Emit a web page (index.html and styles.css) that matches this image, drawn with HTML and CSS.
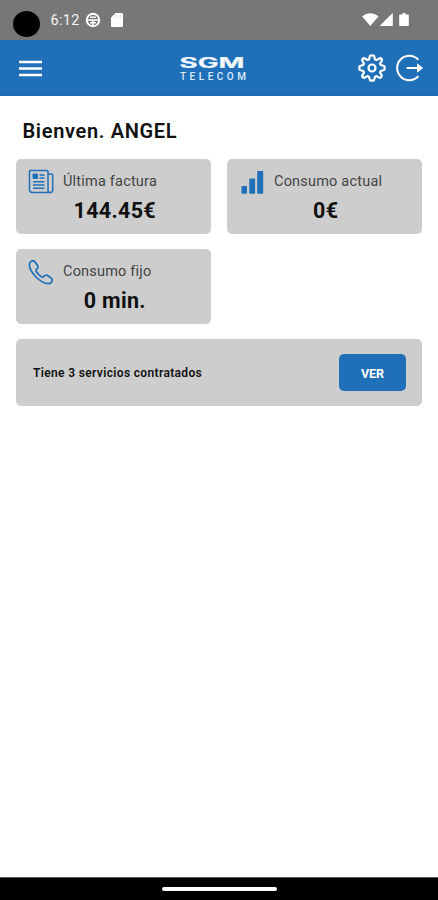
FILE: index.html
```html
<!DOCTYPE html>
<html lang="es">
<head>
<meta charset="utf-8">
<meta name="viewport" content="width=device-width, initial-scale=1">
<title>SGM Telecom</title>
<link rel="stylesheet" href="styles.css">
</head>
<body>
<div class="screen">
  <div class="status">
    <span class="camera"></span>
    <span class="clock">6:12</span>
    <svg class="status-app" width="16" height="16" viewBox="0 0 16 16"><circle cx="8" cy="8" r="6.200" fill="none" stroke="#fff" stroke-width="2"/><path d="M1 8h14M8 8v6M5 5.200h6M5 10.700h6" fill="none" stroke="#fff" stroke-width="1.600"/></svg>
    <svg class="status-sd" width="12" height="14" viewBox="0 0 12 14"><path d="M4.500 0H11a1 1 0 0 1 1 1v12a1 1 0 0 1-1 1H1a1 1 0 0 1-1-1V4.500z" fill="#fff"/><path d="M4.700 2v2.300M7 2v2.300M9.300 2v2.300" stroke="#ccc" stroke-width=".8"/></svg>
    <svg class="status-signals" width="50" height="16" viewBox="0 0 50 16"><path d="M0 4.300Q8.300-1.800 16.600 4.300L8.300 14z M30.800.8V14H17.600z M38 2.500h2.500V1h3v1.500H46q.8 0 .8.800v10q0 .8-.8.800h-8q-.8 0-.8-.8v-10q0-.8.800-.8z" fill="#fff"/></svg>
  </div>
  <header class="bar">
    <svg class="menu" width="23" height="17" viewBox="0 0 23 17"><path d="M0 2h23M0 8.500h23M0 15h23" stroke="#fff" stroke-width="2.300"/></svg>
    <svg class="logo" width="70" height="26" viewBox="0 0 70 26">
      <text class="logo-main" x="1.500" y="13" textLength="65" lengthAdjust="spacingAndGlyphs">SGM</text>
      <text class="logo-sub" x="2" y="25" textLength="66" lengthAdjust="spacing">TELECOM</text>
    </svg>
    <svg class="gear" width="28" height="28" viewBox="0 0 28 28" fill="none" stroke="#fff" stroke-width="2.200" stroke-linejoin="round"><path d="M12 1.800Q14 .8 16 1.800L17 5.400L18.600 6L21.900 4.200Q24 4.500 24 6.400L22.100 9.500L22.700 11L26.200 12Q27.200 14 26.200 16L22.700 17L22.100 18.600L23.900 21.700Q23.600 23.700 21.700 23.900L18.600 22.100L17 22.700L16 26.200Q14 27.200 12 26.200L11 22.700L9.400 22.100L6.300 23.900Q4.300 23.700 4.100 21.700L5.900 18.600L5.300 17L1.800 16Q.8 14 1.800 12L5.300 11L5.900 9.500L4.100 6.300Q4.300 4.300 6.300 4.100L9.400 6L11 5.400z"/><circle cx="14" cy="14" r="3.500"/></svg>
    <svg class="logout" width="28" height="28" viewBox="0 0 28 28" fill="none" stroke="#fff" stroke-width="2"><path d="M22.300 5.700A12.200 12.200 0 1 0 22.300 22.300M10.500 14h14"/><path d="M21.500 10l5 4-5 4z" fill="#fff" stroke-width="1"/></svg>
  </header>
  <main>
    <h1>Bienven. ANGEL</h1>
    <div class="grid">
      <section class="card">
        <div class="head">
          <svg width="26" height="26" viewBox="0 0 26 26" fill="none" stroke="#1f70b9" stroke-width="1.500" stroke-linejoin="round"><path d="M20 22V2.500Q20 1.500 19 1.500H2.500Q1.500 1.500 1.500 2.500v18q0 3 3 3h18q2.200 0 2.200-2.200V6Q24.700 5 23.700 5H20v16.500q0 2 2 2"/><path d="M11.500 6h5M11.500 9h5M5 12.700h11.500M5 16h11.500M5 19.300h11.500"/><rect x="5" y="5" width="4.500" height="4.500" fill="#1f70b9" stroke-width="1"/></svg>
          <span>Última factura</span>
        </div>
        <strong>144.45€</strong>
      </section>
      <section class="card">
        <div class="head">
          <svg width="26" height="26" viewBox="0 0 26 26" fill="#1f70b9"><rect x="2.500" y="17" width="5.500" height="7.800" rx=".8"/><rect x="10.300" y="9.500" width="5.800" height="15.300" rx=".8"/><rect x="18.200" y="2" width="6" height="22.800" rx=".8"/></svg>
          <span>Consumo actual</span>
        </div>
        <strong>0€</strong>
      </section>
      <section class="card">
        <div class="head">
          <svg width="26" height="26" viewBox="0 0 26 26" fill="none" stroke="#1f70b9" stroke-width="1.700" stroke-linejoin="round"><path d="M1.300 5.500Q1.300 3.500 3 2.400Q5.500.8 7.300 3.200L9.500 6.500Q10.700 8.500 8.800 10Q7.400 11 8.400 12.700Q10.200 15.700 13.300 17.600Q15 18.600 16 17.200Q17.500 15.300 19.500 16.500L22.800 18.700Q25.200 20.500 23.600 23Q22.500 24.700 20.500 24.700Q14.500 24.500 8 18Q1.500 11.500 1.300 5.500z"/></svg>
          <span>Consumo fijo</span>
        </div>
        <strong>0 min.</strong>
      </section>
    </div>
    <section class="services">
      <span class="services-text">Tiene 3 servicios contratados</span>
      <button>VER</button>
    </section>
  </main>
  <footer class="nav"><span class="handle"></span></footer>
</div>
</body>
</html>
```
FILE: styles.css
```css
* { box-sizing: border-box; }
body { margin: 0; background: #fff; font-family: Roboto, sans-serif; color: #111; }
.screen { width: 438px; height: 900px; display: flex; flex-direction: column; }
svg { display: block; flex: none; }
.status { height: 40px; background: #777; display: flex; align-items: center; padding-left: 12.500px; }
.camera { width: 27px; height: 26px; border-radius: 50%; background: #000; margin-top: 8px; }
.clock { width: 34px; margin-left: 11px; color: #f4f4f4; font-size: 14.500px; letter-spacing: .3px; line-height: 20px; margin-top: 1px; }
.status-sd { margin-left: 10px; }
.status-signals { margin-left: auto; margin-right: 26px; }
.bar { height: 56px; background: #1f70b9; display: flex; align-items: center; padding: 1px 14.500px 0 18.500px; border-bottom: 1px solid #1b69b1; }
.logo { margin-left: 136.500px; overflow: visible; }
.logo-main { font: 700 14px Inter, sans-serif; fill: #f2f6ff; stroke: #f2f6ff; stroke-width: .2px; }
.logo-sub { font: 500 10px Roboto, sans-serif; fill: #dceaff; }
.gear { margin-left: auto; }
.logout { margin-left: 10px; }
main { flex: 1; padding: 0 16px; }
h1 { margin: 0; padding-left: 6.500px; height: 63px; line-height: 70px; font-size: 20px; font-weight: 600; letter-spacing: .66px; white-space: nowrap; }
.grid { display: grid; grid-template-columns: 195px 195px; column-gap: 16px; row-gap: 15px; }
.card { height: 75px; background: #cdcdcd; border-radius: 5px; padding: 10px 11px 10px 11.500px; display: flex; flex-direction: column; }
.head { display: flex; align-items: center; gap: 9.500px; height: 26px; font-size: 14.500px; letter-spacing: .2px; color: #444; white-space: nowrap; }
.head span { margin-top: -2px; }
.card strong { font-size: 21.500px; font-weight: 700; letter-spacing: .3px; line-height: 26px; margin-top: 3px; padding-left: 2px; text-align: center; }
.services { margin-top: 15px; height: 67px; background: #cdcdcd; border-radius: 5px; display: flex; align-items: center; justify-content: space-between; padding: 0 16px 0 17px; }
.services-text { font-size: 12px; font-weight: 600; letter-spacing: .35px; }
button { width: 67px; height: 37px; border: 0; border-radius: 5px; padding: 1px 0 0; background: #1f70b9; color: #fff; font: 700 12.500px Roboto, sans-serif; }
.nav { height: 23px; background: #000; border-top: 1px solid #555; display: flex; justify-content: center; align-items: center; }
.handle { width: 115px; height: 4px; border-radius: 2px; background: #fff; }
```
